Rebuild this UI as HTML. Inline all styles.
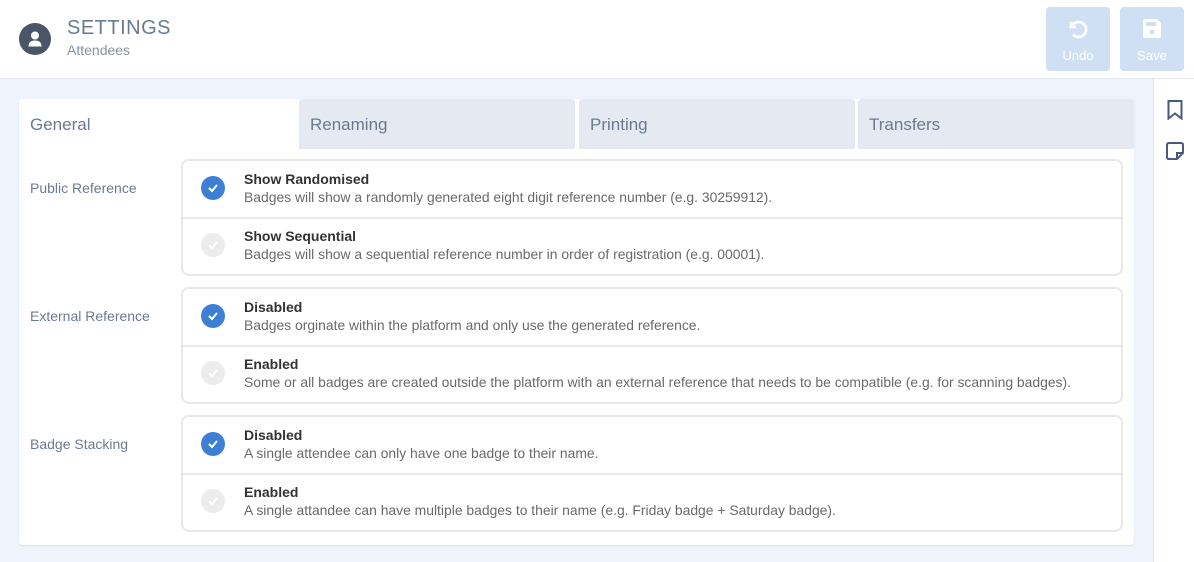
<!DOCTYPE html>
<html><head><style>
*{box-sizing:border-box;margin:0;padding:0}
body{width:1194px;height:562px;overflow:hidden;font-family:"Liberation Sans",sans-serif;background:#fff;position:relative}
.hdr{position:absolute;left:0;top:0;width:1194px;height:79px;border-bottom:1px solid #e3e8ef;background:#fff}
.avatar{position:absolute;left:19px;top:23px;width:32px;height:32px;border-radius:50%;background:#4a5568}
.t1{position:absolute;left:67px;top:17px;font-size:20px;color:#6b7a90;letter-spacing:.5px}
.t2{position:absolute;left:67px;top:42px;font-size:14px;color:#8693a6}
.btn{position:absolute;top:7px;width:64px;height:64px;border-radius:4px;background:#cfe0f5;color:#fff;font-size:13px;text-align:center}
.btn span{position:absolute;left:0;right:0;top:41px}
.btn svg{position:absolute;left:20px;top:10px}
.main{position:absolute;left:0;top:79px;width:1154px;height:483px;background:#eff4fc}
.side{position:absolute;left:1153px;top:79px;width:41px;height:483px;background:#fff;border-left:1px solid #e3e8ef}
.card{position:absolute;left:19px;top:99px;width:1115px;height:446px;background:#fff;border-radius:4px;box-shadow:0 1px 2px rgba(0,0,0,.08)}
.tab{position:absolute;top:99px;height:50px;width:276px;background:#e5e9f2;border-radius:4px 4px 0 0;font-size:17px;color:#6b7a90;padding:16px 0 0 11px}
.tab.a{background:#fff}
.lbl{position:absolute;left:30px;font-size:14px;color:#6b7a90}
.grp{position:absolute;left:181px;width:942px;height:117px;border:2px solid #e8e8e8;border-radius:8px;background:#fff}
.row{position:absolute;left:0;right:0;height:57px}
.row+.row{top:56px;border-top:2px solid #e8e8e8}
.chk{position:absolute;left:18px;top:15px;width:24px;height:24px;border-radius:50%;background:#3d7fd6}
.row+.row .chk{top:14px}
.chk.off{background:#ececec}
.chk svg{position:absolute;left:6px;top:7px}
.ti{position:absolute;left:61px;top:10px;font-size:14px;font-weight:bold;color:#333}
.row+.row .ti{top:9px}
.de{position:absolute;left:61px;top:28px;font-size:13.9px;color:#6a6a6a;white-space:nowrap}
.row+.row .de{top:27px}
</style></head><body>
<div class="hdr">
<div class="avatar"><svg width="32" height="32"><circle cx="16" cy="12.5" r="4" fill="#fff"/><path d="M9.5 23.5 Q9.5 17.5 16 17.5 Q22.5 17.5 22.5 23.5 Z" fill="#fff"/></svg></div>
<div class="t1">SETTINGS</div><div class="t2">Attendees</div>
<div class="btn" style="left:1046px"><svg width="24" height="24" viewBox="0 0 24 24" fill="none" stroke="#fff" stroke-width="2.6"><path d="M5 5 V10 H10"/><path d="M5.5 10 A7.5 7.5 0 1 1 7 17.5"/></svg><span>Undo</span></div>
<div class="btn" style="left:1120px"><svg width="24" height="24" viewBox="0 0 24 24"><path d="M3 4 Q3 2 5 2 H17 L21 6 V19 Q21 21 19 21 H5 Q3 21 3 19 Z" fill="#fff"/><rect x="6" y="5" width="10" height="4" fill="#cfe0f5"/><circle cx="12" cy="15" r="2.5" fill="#cfe0f5"/></svg><span>Save</span></div>
</div>
<div class="main"></div>
<div class="side">
<svg style="position:absolute;left:13px;top:21px" width="16" height="20" viewBox="0 0 16 20" fill="none" stroke="#4a5a78" stroke-width="2"><path d="M1.5 1 H14.5 V18.5 L8 13.5 L1.5 18.5 Z"/></svg>
<svg style="position:absolute;left:12px;top:63px" width="18" height="18" viewBox="0 0 18 18" fill="none" stroke="#4a5a78" stroke-width="2"><path d="M3 1 H15 Q17 1 17 3 V11 L11 17 H3 Q1 17 1 15 V3 Q1 1 3 1 Z M11 17 V11 H17"/></svg>
</div>
<div class="card"></div>
<div class="tab a" style="left:19px">General</div>
<div class="tab" style="left:299px">Renaming</div>
<div class="tab" style="left:579px">Printing</div>
<div class="tab" style="left:858px">Transfers</div>

<div class="lbl" style="top:180px">Public Reference</div>
<div class="grp" style="top:159px">
<div class="row"><div class="chk"><svg width="12" height="10"><path d="M2 5 L5 8 L10 2" stroke="#fff" stroke-width="2" fill="none"/></svg></div><div class="ti">Show Randomised</div><div class="de">Badges will show a randomly generated eight digit reference number (e.g. 30259912).</div></div>
<div class="row"><div class="chk off"><svg width="12" height="10"><path d="M2 5 L5 8 L10 2" stroke="#fff" stroke-width="2" fill="none"/></svg></div><div class="ti">Show Sequential</div><div class="de">Badges will show a sequential reference number in order of registration (e.g. 00001).</div></div>
</div>

<div class="lbl" style="top:308px">External Reference</div>
<div class="grp" style="top:287px">
<div class="row"><div class="chk"><svg width="12" height="10"><path d="M2 5 L5 8 L10 2" stroke="#fff" stroke-width="2" fill="none"/></svg></div><div class="ti">Disabled</div><div class="de">Badges orginate within the platform and only use the generated reference.</div></div>
<div class="row"><div class="chk off"><svg width="12" height="10"><path d="M2 5 L5 8 L10 2" stroke="#fff" stroke-width="2" fill="none"/></svg></div><div class="ti">Enabled</div><div class="de">Some or all badges are created outside the platform with an external reference that needs to be compatible (e.g. for scanning badges).</div></div>
</div>

<div class="lbl" style="top:436px">Badge Stacking</div>
<div class="grp" style="top:415px">
<div class="row"><div class="chk"><svg width="12" height="10"><path d="M2 5 L5 8 L10 2" stroke="#fff" stroke-width="2" fill="none"/></svg></div><div class="ti">Disabled</div><div class="de">A single attendee can only have one badge to their name.</div></div>
<div class="row"><div class="chk off"><svg width="12" height="10"><path d="M2 5 L5 8 L10 2" stroke="#fff" stroke-width="2" fill="none"/></svg></div><div class="ti">Enabled</div><div class="de">A single attandee can have multiple badges to their name (e.g. Friday badge + Saturday badge).</div></div>
</div>
</body></html>
